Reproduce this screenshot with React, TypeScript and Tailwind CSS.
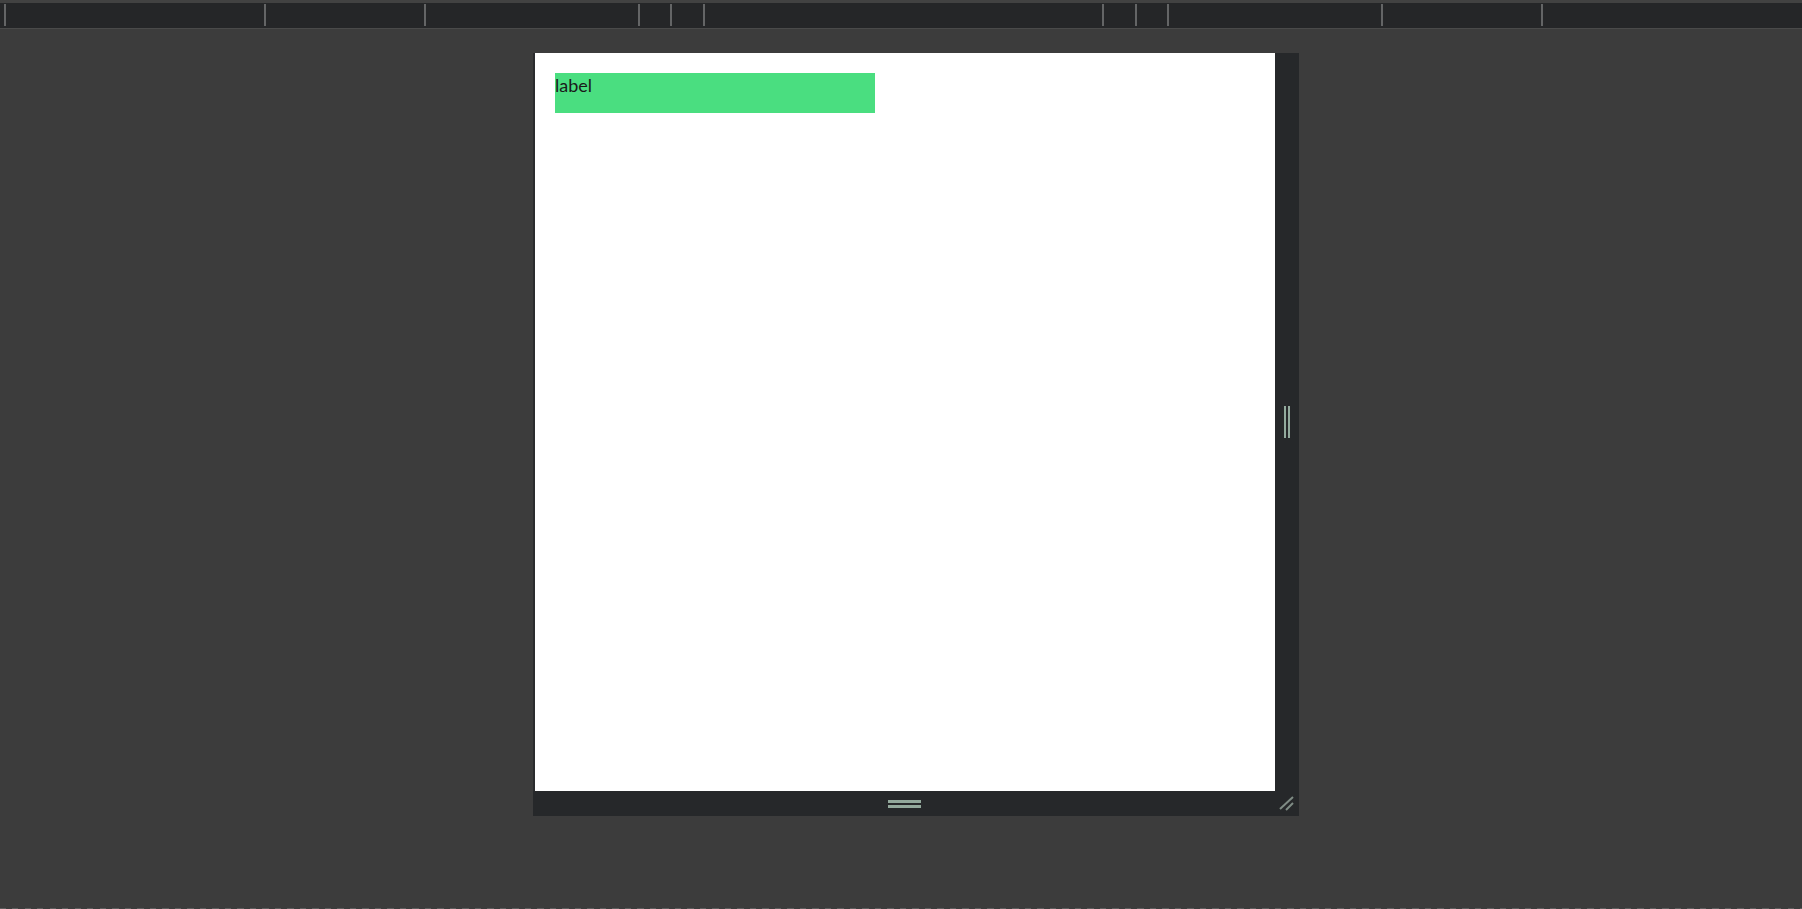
import React from "react";

const segs = [260, 160, 214, 32, 33, 399, 33, 32, 214, 160];

export default function App() {
  return (
    <div className="w-[1802px] h-[909px] flex flex-col bg-[#3c3c3c] overflow-hidden" style={{ fontFamily: "Lato, 'Noto Sans', sans-serif" }}>
      <div className="h-[3px] bg-[#424242]" />
      <div className="h-[25px] bg-[#252628] flex items-start pt-[1px] pl-[4px]">
        {segs.map((w, i) => (
          <div key={i} className="h-[22px] border-l-2 border-[#646566] shrink-0" style={{ width: w }} />
        ))}
        <div className="h-[22px] border-l-2 border-[#646566] flex-1" />
      </div>
      <div className="h-px bg-[#4a4a4a]" />
      <div className="flex-1 pt-[24px] pl-[533px]">
        <div className="w-[766px] h-[763px] flex flex-col bg-[#26282a]">
          <div className="flex h-[738px]">
            <div className="w-[2px] bg-[#2a2b2d]" />
            <div className="w-[740px] bg-white p-5">
              <div className="w-[320px] h-[40px] bg-[#4ade80] text-[18px] leading-[25px] text-[#1a1a1a]">label</div>
            </div>
            <div className="w-[24px] flex items-center justify-center">
              <div className="flex gap-[2px] pr-[1px]">
                <div className="w-[2px] h-[32px] bg-[#93ab9e]" />
                <div className="w-[2px] h-[32px] bg-[#93ab9e]" />
              </div>
            </div>
          </div>
          <div className="flex h-[25px]">
            <div className="w-[742px] flex flex-col items-center justify-center gap-[2px] pt-[1px]">
              <div className="w-[33px] h-[3px] bg-[#93a99c]" />
              <div className="w-[33px] h-[3px] bg-[#93a99c]" />
            </div>
            <div className="w-[24px] relative">
              <svg className="absolute left-[3px] top-[4px]" width="17" height="17" viewBox="0 0 17 17">
                <line x1="2" y1="14" x2="15" y2="2" stroke="#7f8c85" strokeWidth="2" />
                <line x1="8" y1="15" x2="15" y2="8" stroke="#7f8c85" strokeWidth="2" />
              </svg>
            </div>
          </div>
        </div>
      </div>
      <div className="h-px bg-[repeating-linear-gradient(90deg,#5e5e5e_0px,#5e5e5e_6px,transparent_6px,transparent_12.5px)]" />
    </div>
  );
}
